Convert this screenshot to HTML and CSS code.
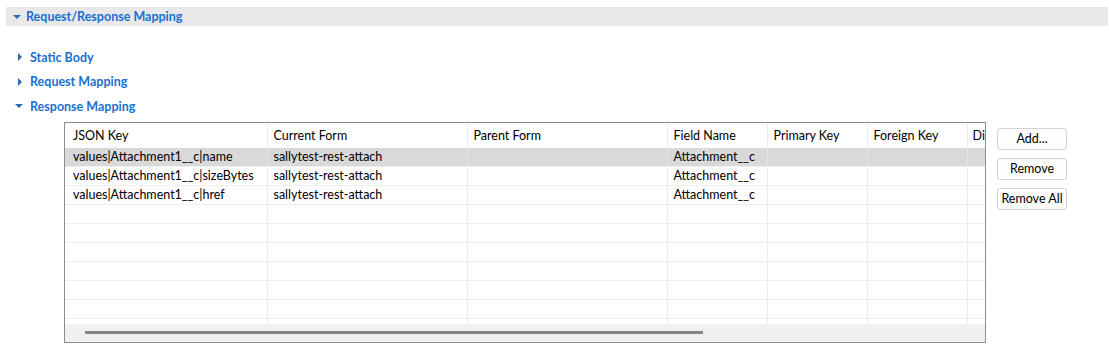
FILE: index.html
```html
<!DOCTYPE html>
<html lang="en">
<head>
    <meta charset="UTF-8">
    <meta name="viewport" content="width=device-width, initial-scale=1.0">
    <title>Request/Response Mapping</title>
    <link rel="stylesheet" href="styles.css">
</head>
<body>
    <div class="topbar">
        <span class="tri-down"></span>
        <span class="title">Request/Response Mapping</span>
    </div>

    <div class="sections">
        <div class="section"><span class="tri-right"></span><span class="title">Static Body</span></div>
        <div class="section"><span class="tri-right"></span><span class="title">Request Mapping</span></div>
        <div class="section open"><span class="tri-down"></span><span class="title">Response Mapping</span></div>
    </div>

    <div class="mapping">
        <div class="grid-box">
            <div class="grid-view">
                <table class="grid">
                    <colgroup>
                        <col class="c-wide first">
                        <col class="c-wide">
                        <col class="c-wide">
                        <col class="c-small">
                        <col class="c-small">
                        <col class="c-small">
                        <col class="c-small">
                    </colgroup>
                    <thead>
                        <tr>
                            <th>JSON Key</th>
                            <th>Current Form</th>
                            <th>Parent Form</th>
                            <th>Field Name</th>
                            <th>Primary Key</th>
                            <th>Foreign Key</th>
                            <th class="last">Di</th>
                        </tr>
                    </thead>
                    <tbody>
                        <tr class="selected">
                            <td>values|Attachment1__c|name</td>
                            <td>sallytest-rest-attach</td>
                            <td></td>
                            <td>Attachment__c</td>
                            <td></td><td></td><td></td>
                        </tr>
                        <tr>
                            <td>values|Attachment1__c|sizeBytes</td>
                            <td>sallytest-rest-attach</td>
                            <td></td>
                            <td>Attachment__c</td>
                            <td></td><td></td><td></td>
                        </tr>
                        <tr>
                            <td>values|Attachment1__c|href</td>
                            <td>sallytest-rest-attach</td>
                            <td></td>
                            <td>Attachment__c</td>
                            <td></td><td></td><td></td>
                        </tr>
                        <tr><td></td><td></td><td></td><td></td><td></td><td></td><td></td></tr>
                        <tr><td></td><td></td><td></td><td></td><td></td><td></td><td></td></tr>
                        <tr><td></td><td></td><td></td><td></td><td></td><td></td><td></td></tr>
                        <tr><td></td><td></td><td></td><td></td><td></td><td></td><td></td></tr>
                        <tr><td></td><td></td><td></td><td></td><td></td><td></td><td></td></tr>
                        <tr><td></td><td></td><td></td><td></td><td></td><td></td><td></td></tr>
                        <tr><td></td><td></td><td></td><td></td><td></td><td></td><td></td></tr>
                    </tbody>
                </table>
            </div>
            <div class="hscroll"><div class="thumb"></div></div>
        </div>

        <div class="actions">
            <button>Add...</button>
            <button>Remove</button>
            <button>Remove All</button>
        </div>
    </div>
</body>
</html>
```

FILE: styles.css
```css
body {
    margin: 0;
    background-color: #fff;
    font-family: Lato, "Noto Sans", sans-serif;
    font-size: 12.5px;
    color: #000;
}

/* section headers */
.topbar {
    display: flex;
    align-items: center;
    height: 19px;
    margin: 7px 1px 0 6px;
    padding-left: 7px;
    background-color: #e8e8e8;
}

.title {
    color: #1a6fd0;
    font-weight: bold;
}

.tri-down {
    width: 0;
    height: 0;
    border-left: 4px solid transparent;
    border-right: 4px solid transparent;
    border-top: 4px solid #2a6cb4;
    margin-right: 5px;
}

.tri-right {
    width: 0;
    height: 0;
    border-top: 4px solid transparent;
    border-bottom: 4px solid transparent;
    border-left: 4px solid #2a6cb4;
    margin-right: 8px;
}

.sections {
    margin-top: 19px;
}

.section {
    display: flex;
    align-items: center;
    height: 24.5px;
    padding-left: 18px;
}

.section.open {
    padding-left: 15px;
}

.section.open .tri-down {
    margin-right: 7px;
}

/* table + buttons */
.mapping {
    display: flex;
    align-items: flex-start;
    margin: 3px 0 0 64px;
}

.grid-box {
    width: 920px;
    height: 219px;
    border: 1px solid #8a8d91;
    display: flex;
    flex-direction: column;
    overflow: hidden;
}

.grid-view {
    flex: 1;
    overflow: hidden;
}

.grid {
    table-layout: fixed;
    border-collapse: collapse;
    width: 1002px;
}

.c-wide { width: 200px; }
.c-wide.first { width: 202px; }
.c-small { width: 100px; }

.grid th,
.grid td {
    padding: 0 0 0 6px;
    white-space: nowrap;
    overflow: hidden;
    text-align: left;
    font-weight: normal;
    border-right: 1px solid #e7edf6;
}

.grid th:first-child,
.grid td:first-child {
    padding-left: 8px;
}

.grid th.last {
    padding-left: 5px;
}

.grid th {
    height: 25px;
    line-height: 25px;
}

.grid td {
    height: 18px;
    line-height: 18px;
    border-bottom: 1px solid #efefef;
}

.grid tr.selected td {
    background-color: #d9d9d9;
    border-right-color: #e6e6e6;
}

.hscroll {
    height: 18px;
    background-color: #f0f0f0;
    display: flex;
    align-items: center;
}

.thumb {
    width: 618px;
    height: 3px;
    margin-left: 20px;
    background-color: #868686;
}

.actions {
    display: flex;
    flex-direction: column;
    gap: 8px;
    margin: 6px 0 0 11px;
}

button {
    width: 70px;
    height: 22px;
    padding: 0;
    font-family: inherit;
    font-size: 12.5px;
    color: #000;
    background-color: #fdfdfd;
    border: 1px solid #d3d3d3;
    border-radius: 3px;
    cursor: pointer;
}

button:hover {
    background-color: #eef4fb;
}
```
